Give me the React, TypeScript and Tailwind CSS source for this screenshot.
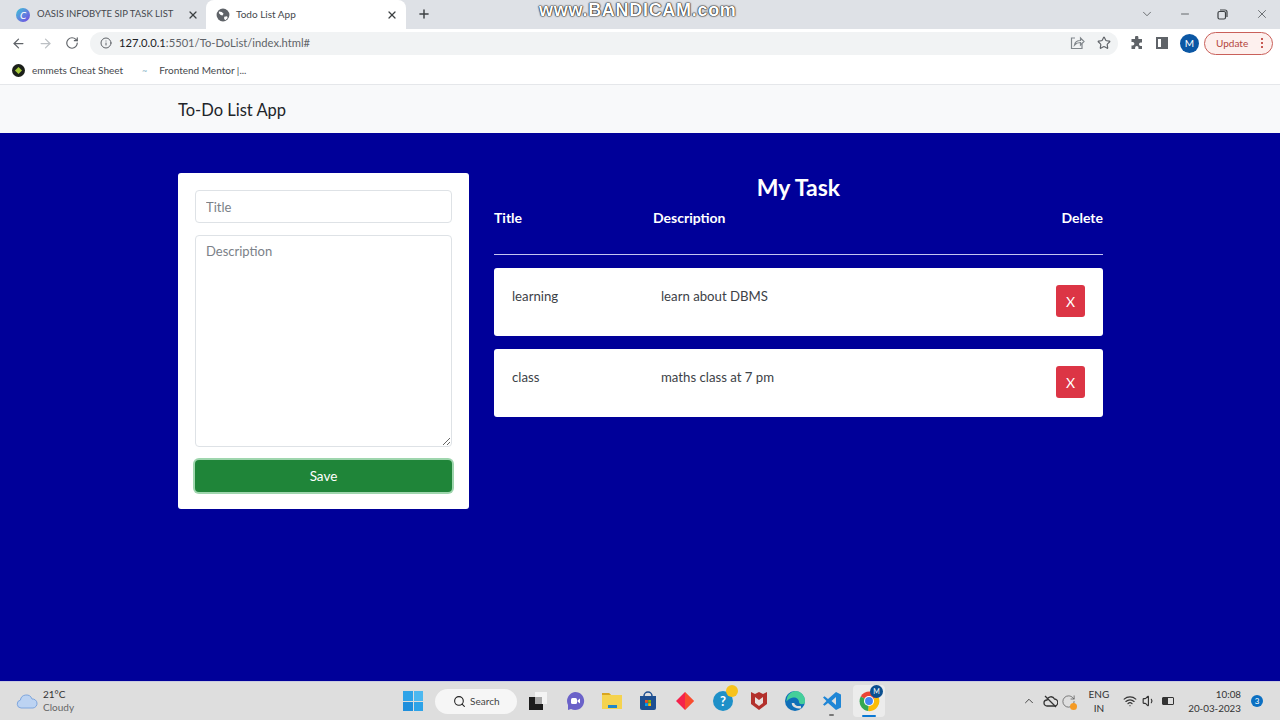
import {
  ArrowLeft,
  ArrowRight,
  ChevronDown,
  ChevronUp,
  Info,
  Minus,
  Plus,
  RotateCw,
  Search,
  Star,
  Volume1,
  Wifi,
  X,
} from 'lucide-react'

const font = 'font-["Lato",sans-serif]'

const ChromeLogo = ({ size = 14 }: { size?: number }) => (
  <svg width={size} height={size} viewBox="0 0 24 24">
    <path d="M12 12 L3 7 A11 11 0 0 1 22 7 Z" fill="#ea4335" />
    <path d="M12 12 L22 7 A11 11 0 0 1 11 23 Z" fill="#fbbc05" />
    <path d="M12 12 L11 23 A11 11 0 0 1 3 7 Z" fill="#34a853" />
    <circle cx="12" cy="12" r="5.5" fill="#fff" />
    <circle cx="12" cy="12" r="4.3" fill="#4285f4" />
  </svg>
)

const Tabs = () => (
  <div className="flex h-[29px] items-end bg-[#dee1e6] pl-2">
    <div className="flex h-[29px] w-[198px] items-center pl-[8px]">
      <span className="flex h-[14px] w-[14px] items-center justify-center rounded-full bg-gradient-to-br from-[#22c3d6] to-[#6d3be0] text-[10px] italic leading-none text-white">
        C
      </span>
      <span className="ml-[7px] w-[150px] whitespace-nowrap text-[9.5px] text-[#45484d]">OASIS INFOBYTE SIP TASK LIST</span>
      <X size={12} strokeWidth={2.5} className="text-[#3c4043]" />
    </div>
    <div className="flex h-[29px] w-[200px] items-center rounded-t-lg bg-white pl-[10px]">
      <svg width="14" height="14" viewBox="0 0 24 24" fill="#5f6368">
        <circle cx="12" cy="12" r="11" />
        <path d="M5 6l5 1 3 3-2 3-3-1-3-3zM14 15l5-1 1 3-4 4-2-2z" fill="#fff" />
      </svg>
      <span className="ml-[6px] w-[150px] text-[10px] text-[#45484d]">Todo List App</span>
      <X size={12} strokeWidth={2.5} className="text-[#3c4043]" />
    </div>
    <Plus size={14} strokeWidth={2.5} className="mb-[8px] ml-[11px] text-[#3c4043]" />
    <div className="mb-[5px] ml-[108px] flex-1 font-['Liberation_Sans',sans-serif] text-[18px] font-bold tracking-[0.7px] text-white [text-shadow:0_0_2px_#111,0_0_1px_#111,0_0_1px_#111]">
      www.BANDICAM.com
    </div>
    <div className="mb-[8px] flex items-center text-[#3c4043]">
      <ChevronDown size={14} strokeWidth={1.2} />
      <Minus size={12} strokeWidth={1.5} className="ml-[25px]" />
      <svg className="ml-[26px]" width="11" height="11" viewBox="0 0 11 11" fill="none" stroke="#3c4043" strokeWidth="1.2">
        <rect x="1" y="2.500" width="7.500" height="7.500" rx="1.500" />
        <path d="M3 1h5a2 2 0 0 1 2 2v5" />
      </svg>
      <X size={14} strokeWidth={1.2} className="ml-[27px] mr-[11px]" />
    </div>
  </div>
)

const Toolbar = () => (
  <div className="flex h-[28px] items-center bg-white pl-[11px] pr-[7px]">
    <ArrowLeft size={15} className="text-[#5f6368]" />
    <ArrowRight size={15} className="ml-[12px] text-[#bcc0c4]" />
    <RotateCw size={14} className="ml-[12px] text-[#5f6368]" />
    <div className="ml-[11px] flex h-[23px] w-[1028px] items-center rounded-full bg-[#f1f3f4] pl-[10px] pr-[7px]">
      <Info size={12} className="text-[#5f6368]" />
      <span className="ml-[7px] flex-1 text-[11.2px] text-[#202124]">
        127.0.0.1<span className="text-[#5f6368]">:5501/To-DoList/index.html#</span>
      </span>
      <svg width="15" height="14" viewBox="0 0 15 14" fill="none" stroke="#80868b" strokeWidth="1.2">
        <path d="M5 2H1.500v10.500H12V8" />
        <path d="M4.500 9c.5-3 3-4.500 6-4.500V2l3.500 3.500L10.500 9V6.500c-2.500 0-4.500.8-6 2.500z" />
      </svg>
      <Star size={14} className="ml-[12px] text-[#5f6368]" />
    </div>
    <svg className="ml-[12px]" width="14" height="14" viewBox="0 0 14 14" fill="#5f6368">
      <path d="M5 1.500a1.700 1.700 0 0 1 3.400 0V3H12v3.600h-1.300a1.700 1.700 0 0 0 0 3.400H12v3H8.500v-1.200a1.700 1.700 0 0 0-3.400 0V13H1.500V9.500h1.200a1.700 1.700 0 0 0 0-3.400H1.500V3H5z" />
    </svg>
    <span className="ml-[12px] flex h-[12px] w-[12px] justify-end border-2 border-[#5f6368]">
      <span className="h-full w-[5px] bg-[#5f6368]" />
    </span>
    <span className="ml-[12px] flex h-[19px] w-[19px] items-center justify-center rounded-full bg-[#0b57a4] text-[10px] text-white">
      M
    </span>
    <span className="ml-[5px] flex h-[23px] w-[69px] items-center rounded-full border border-[#c9605a] bg-[#fdf0ee] pl-[11px] text-[10px] text-[#b3443c]">
      Update
      <span className="ml-[13px] flex flex-col gap-[2px]">
        <span className="h-[2px] w-[2px] rounded-full bg-[#b3261e]" />
        <span className="h-[2px] w-[2px] rounded-full bg-[#b3261e]" />
        <span className="h-[2px] w-[2px] rounded-full bg-[#b3261e]" />
      </span>
    </span>
  </div>
)

const Bookmarks = () => (
  <div className="flex h-[28px] items-center border-b border-[#e5e7ea] bg-white pl-[12px] text-[10px] text-[#45484d]">
    <span className="flex h-[13px] w-[13px] items-center justify-center rounded-full bg-[#1b1f1a]">
      <span className="h-[5px] w-[5px] rotate-45 bg-[#a5c93a]" />
    </span>
    <span className="ml-[7px]">emmets Cheat Sheet</span>
    <span className="ml-[19px] text-[9px] text-[#8fb8c9]">~</span>
    <span className="ml-[12px]">Frontend Mentor |...</span>
  </div>
)

const Task = ({ title, description }: { title: string; description: string }) => (
  <div className="flex h-[68px] rounded-[3px] bg-white pl-[18px] pr-[18px] text-[13.2px] text-[#3d4247]">
    <div className="w-[149px] pt-[19px]">{title}</div>
    <div className="flex-1 pt-[19px]">{description}</div>
    <button className="mt-[17px] h-[32px] w-[29px] rounded-[3px] bg-[#dc3545] text-[14px] text-white">X</button>
  </div>
)

const Main = () => (
  <main className="flex h-[548px] items-start bg-[#000099] pl-[178px] pt-[40px]">
    <form className="flex h-[336px] w-[291px] flex-col rounded-[3px] bg-white px-[17px] pt-[17px]">
      <input
        placeholder="Title"
        className="h-[33px] rounded-[4px] border border-[#dee2e6] px-[10px] text-[13px] placeholder:text-[#7b8188]"
      />
      <textarea
        placeholder="Description"
        className="mt-[12px] h-[212px] rounded-[4px] border border-[#dee2e6] px-[10px] py-[6px] text-[13px] placeholder:text-[#7b8188]"
      />
      <button
        type="button"
        className="mt-[13px] h-[32px] rounded-[4px] bg-[#1f8539] text-[13.500px] text-white shadow-[0_0_0_2px_#9fd6ae]"
      >
        Save
      </button>
    </form>
    <section className="ml-[25px] w-[609px] text-white">
      <h2 className="text-center text-[23px] font-bold leading-[28px]">My Task</h2>
      <div className="mt-[6px] flex h-[30px] text-[14px] font-bold">
        <div className="w-[159px]">Title</div>
        <div className="flex-1">Description</div>
        <div>Delete</div>
      </div>
      <hr className="mt-[17px] border-[#c5c5f0]" />
      <div className="mt-[13px] flex flex-col gap-[13px]">
        <Task title="learning" description="learn about DBMS" />
        <Task title="class" description="maths class at 7 pm" />
      </div>
    </section>
  </main>
)

const Taskbar = () => (
  <div className="relative flex h-[39px] items-center border-t border-[#c9cbe0] bg-[#dedede] text-[#333]">
    <div className="flex items-center pl-[16px]">
      <svg width="22" height="16" viewBox="0 0 22 16">
        <path
          d="M5 15a4 4 0 0 1-.6-7.900A6 6 0 0 1 16 6a4.500 4.500 0 0 1 1 9z"
          fill="#bcd3f2"
          stroke="#7ea6de"
          strokeWidth="1"
        />
      </svg>
      <div className="ml-[5px] text-[10px] leading-[13px]">
        <div>21°C</div>
        <div className="text-[#666]">Cloudy</div>
      </div>
    </div>
    <div className="ml-[329px] flex items-center">
      <div className="grid h-[20px] w-[20px] grid-cols-2 gap-[1px]">
        <span className="bg-[#2ea3e8]" />
        <span className="bg-[#4cb8f0]" />
        <span className="bg-[#1f8fdc]" />
        <span className="bg-[#2ea3e8]" />
      </div>
      <div className="ml-[12px] flex h-[25px] w-[82px] items-center rounded-full bg-[#f6f6f6] pl-[18px] text-[10px] text-[#444]">
        <Search size={13} className="text-[#222]" />
        <span className="ml-[4px]">Search</span>
      </div>
      <svg className="ml-[12px]" width="18" height="18" viewBox="0 0 18 18">
        <path d="M0 5h7v7h7v6H0z" fill="#1c1c1c" />
        <path d="M6 5h7v7H6z" fill="#a8a8a8" />
        <path d="M6 0h12v12h-5V5H6z" fill="#f4f4f4" />
      </svg>
      <svg className="ml-[18px]" width="20" height="20" viewBox="0 0 20 20">
        <path d="M10 1a9 9 0 1 1-4 17l-3 1v-5A9 9 0 0 1 10 1z" fill="#6b62c9" />
        <rect x="6" y="7" width="6" height="6" rx="1.500" fill="#fff" />
        <path d="M12.500 9.500l2.500-2v5l-2.500-2z" fill="#fff" />
      </svg>
      <svg className="ml-[16px]" width="22" height="18" viewBox="0 0 22 18">
        <path d="M1 1h7l2 2h11v14H1z" fill="#f5d34f" />
        <path d="M1 1h7l2 2H1z" fill="#d9a520" />
        <rect x="7" y="13" width="9" height="3" fill="#2187c9" />
      </svg>
      <svg className="ml-[15px]" width="20" height="20" viewBox="0 0 20 20">
        <path d="M2 5h16v12a2 2 0 0 1-2 2H4a2 2 0 0 1-2-2z" fill="#1d4f91" />
        <path d="M6 5a4 4 0 0 1 8 0" fill="none" stroke="#1d4f91" strokeWidth="1.500" />
        <rect x="7" y="9" width="2.800" height="2.800" fill="#f25022" />
        <rect x="10.200" y="9" width="2.800" height="2.800" fill="#7fba00" />
        <rect x="7" y="12.200" width="2.800" height="2.800" fill="#00a4ef" />
        <rect x="10.200" y="12.200" width="2.800" height="2.800" fill="#ffb900" />
      </svg>
      <svg className="ml-[17px]" width="20" height="20" viewBox="0 0 20 20">
        <path d="M10 1l9 9-9 9-9-9z" fill="#f5224b" />
        <path d="M10 1l9 9-9 9z" fill="#f97316" opacity="0.55" />
      </svg>
      <span className="relative ml-[18px] flex h-[20px] w-[20px] items-center justify-center rounded-full bg-[#1e90c8] text-[13px] font-bold leading-none text-white">
        ?
        <span className="absolute -right-[5px] -top-[6px] h-[12px] w-[12px] rounded-full bg-[#f7c21c]" />
      </span>
      <svg className="ml-[17px]" width="18" height="20" viewBox="0 0 18 20">
        <path d="M1 1l4 2 4-2 4 2 4-2v12l-8 6-8-6z" fill="#b3302c" />
        <path d="M5 6l4 3 4-3v6l-4 3-4-3z" fill="#e8dedd" />
      </svg>
      <svg className="ml-[17px]" width="20" height="20" viewBox="0 0 20 20">
        <circle cx="10" cy="10" r="10" fill="#0f6fb8" />
        <path d="M10 0a10 10 0 0 1 10 11c0 3-6 3-6 0 0-3-3-5-6-4.500-2 .3-5 2-6.500 4A10 10 0 0 1 10 0z" fill="#45cf9a" />
        <path d="M8 12c0 3 4 5 8 4" fill="none" stroke="#dedede" strokeWidth="2.500" />
      </svg>
      <span className="relative ml-[17px] flex">
        <svg width="20" height="20" viewBox="0 0 20 20">
          <path d="M14 1l5 2.500v13L14 19 6 12l-3.500 2.700L1 13.500 4.500 10 1 6.500l1.500-1.200L6 8z" fill="#1f86d6" />
          <path d="M14 6l-4.500 4L14 14z" fill="#dedede" />
        </svg>
        <span className="absolute -bottom-[5px] left-[7px] h-[2px] w-[5px] rounded-full bg-[#777]" />
      </span>
      <span className="relative ml-[11px] flex h-[32px] w-[32px] items-center justify-center rounded-[4px] bg-[#ececec]">
        <ChromeLogo size={22} />
        <span className="absolute right-[2px] top-[0px] flex h-[13px] w-[13px] items-center justify-center rounded-full bg-[#0b4f8f] text-[7px] text-white">
          M
        </span>
        <span className="absolute bottom-0 left-[9px] h-[2px] w-[14px] rounded-full bg-[#0a78d4]" />
      </span>
    </div>
    <div className="ml-auto flex items-center pr-[17px] text-[#333]">
      <ChevronUp size={14} strokeWidth={1.5} />
      <svg className="ml-[7px]" width="15" height="13" viewBox="0 0 15 13" fill="none" stroke="#333" strokeWidth="1.300">
        <path d="M4 11a3 3 0 0 1 0-6 4 4 0 0 1 7.500-1A3.500 3.500 0 0 1 11 11z" />
        <path d="M2 1l11 11" />
      </svg>
      <span className="relative ml-[3px] flex">
        <RotateCw size={15} strokeWidth={1.2} className="text-[#555]" />
        <span className="absolute -bottom-[1px] -right-[1px] h-[7px] w-[7px] rounded-full bg-[#f59a23]" />
      </span>
      <div className="ml-[13px] text-center text-[10px] leading-[14px]">
        <div>ENG</div>
        <div>IN</div>
      </div>
      <Wifi size={14} className="ml-[14px]" />
      <Volume1 size={14} className="ml-[5px]" />
      <span className="relative ml-[6px] h-[8px] w-[12px] rounded-[1px] border border-[#333]">
        <span className="block h-full w-[5px] bg-[#333]" />
      </span>
      <div className="ml-[14px] text-right text-[9.800px] leading-[14px]">
        <div>10:08</div>
        <div>20-03-2023</div>
      </div>
      <span className="ml-[10px] flex h-[12px] w-[12px] items-center justify-center rounded-full bg-[#0b6fc2] text-[8px] text-white">
        3
      </span>
    </div>
  </div>
)

export default function App() {
  return (
    <div className={`h-[720px] w-[1280px] overflow-hidden ${font}`}>
      <Tabs />
      <Toolbar />
      <Bookmarks />
      <nav className="flex h-[48px] items-center bg-[#f8f9fa] pl-[178px] pt-[2px] text-[16.500px] text-[#212529]">To-Do List App</nav>
      <Main />
      <Taskbar />
    </div>
  )
}
